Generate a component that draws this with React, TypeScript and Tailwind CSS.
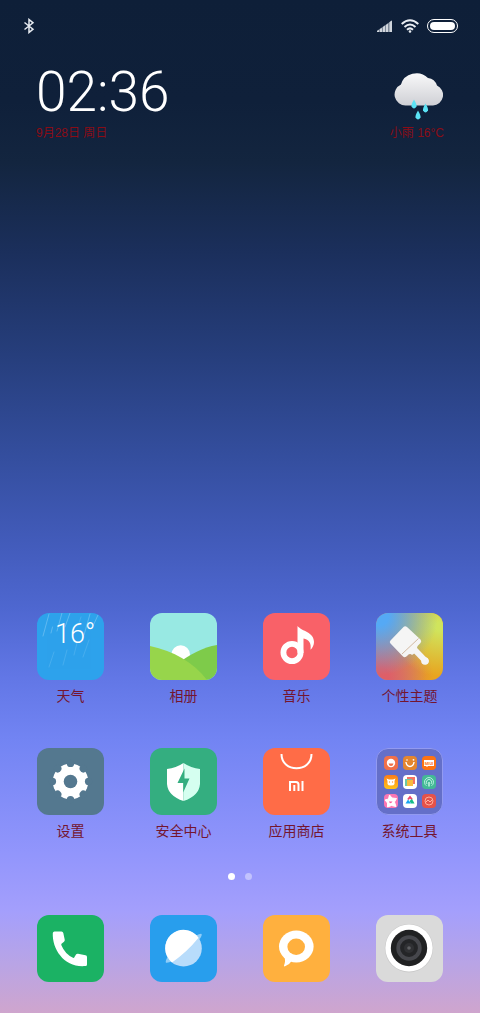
import React from 'react'

const GearIcon = () => (
  <svg viewBox="0 0 67 67" className="w-full h-full bg-[#54788f]">
    <circle cx="33.5" cy="33.5" r="17.8" fill="#fff" />
    {[0, 45, 90, 135, 180, 225, 270, 315].map((angle) => (
      <circle key={angle} cx="33.5" cy="15.4" r="3.7" fill="#54788f" transform={`rotate(${angle} 33.5 33.5)`} />
    ))}
    <circle cx="33.5" cy="33.5" r="6.8" fill="#54788f" />
  </svg>
)

const WeatherIcon = () => (
  <svg viewBox="0 0 67 67" className="w-full h-full bg-[#2da2ec]">
    <g stroke="#fff" strokeWidth="0.6" strokeLinecap="round">
      <path d="M12 1 L6 23 M15.500 14 L14 20 M25 0 L20 18 M33 0 L28 14 M53 1 L47 22 M61 2 L56 13" opacity="0.4" />
      <path d="M17 39 L12 54 M30 37 L26 52 M40 30 L37 42 M52 27 L46 44 M44 4 L41 13" opacity="0.2" />
    </g>
    <text x="18" y="30" fill="#fff" fontSize="27" className="font-['Roboto',sans-serif] font-light">16°</text>
  </svg>
)

const GalleryIcon = () => (
  <svg viewBox="0 0 67 67" className="w-full h-full bg-[#98e9e3]">
    <circle cx="30.700" cy="41.500" r="9.300" fill="#fff" />
    <path d="M28 50 C40 42 53 34 67 32 V67 H28 Z" fill="#7ecb4a" />
    <path d="M0 33 C24 38 43 49 57 67 H0 Z" fill="#97d54b" />
  </svg>
)

const MusicIcon = () => (
  <svg viewBox="0 0 67 67" className="w-full h-full bg-[#f96168]">
    <circle cx="29" cy="39.500" r="8.600" fill="none" stroke="#fff" strokeWidth="5.800" />
    <path d="M34.500 13 C39 18.500 51 19 51 29 C51 32 49.500 35 47.500 36.800 C48.500 30 46 26.500 40.500 25.500 V40 H34.500 Z" fill="#fff" />
  </svg>
)

const ThemeIcon = () => (
  <div className="w-full h-full bg-[radial-gradient(circle_at_5%_5%,#55a9f5_10%,transparent_65%),radial-gradient(circle_at_95%_20%,#d0e45c_5%,transparent_60%),radial-gradient(circle_at_5%_95%,#de5f68_10%,transparent_60%),linear-gradient(to_right,#b58a86,#e8a41f_75%)]">
    <svg viewBox="0 0 67 67" className="w-full h-full">
      <path d="M37 35 L49.500 48" stroke="#f5f5f5" strokeWidth="6" strokeLinecap="round" />
      <circle cx="49" cy="48" r="3.800" fill="#f5f5f5" />
      <path d="M27.500 14 Q29 12.500 31 14 L44.500 26.500 Q46 28 44.500 30 L42 32.500 Q40 35 42 38 L36 42 Q34 40 31.500 42.500 Q29 45.500 27 43.500 L14.500 30.500 Q13 29 14.500 27.500 Z" fill="#f5f5f5" />
      <path d="M26 41 L42.500 25.500" stroke="#c9a98c" strokeWidth="0.800" />
    </svg>
  </div>
)

const ShieldIcon = () => (
  <svg viewBox="0 0 67 67" className="w-full h-full bg-[#34ae80]">
    <path d="M33.500 15 Q26 20 17 21 V36 Q18 48 33.500 53 Z" fill="#fff" />
    <path d="M33.500 15 Q41 20 50 21 V36 Q49 48 33.500 53 Z" fill="#d5fff0" />
    <path d="M34.500 20.500 L27.500 35 H33.200 V44.500 L39.500 30.500 H34.500 Z" fill="#34ae80" />
  </svg>
)

const StoreIcon = () => (
  <svg viewBox="0 0 67 67" className="w-full h-full bg-[#ff6c47]">
    <path d="M18.500 6 C18.500 25 48.500 25 48.500 6" fill="none" stroke="#fff" strokeWidth="2" />
    <path d="M27 43 V34 H33 Q35.500 34 35.500 36.500 V43 M31.300 37 V43 M39.500 33 V43" fill="none" stroke="#fff" strokeWidth="2" />
  </svg>
)

const FolderIcon = () => (
  <div className="w-full h-full bg-[#646fc8] border-[1px] border-[#929af0] rounded-xl grid grid-cols-[14px_14px_14px] content-center justify-center gap-[5px]">
    <svg viewBox="0 0 14 14" className="w-[14px] h-[14px] rounded-sm bg-[#f0714a]">
      <circle cx="7" cy="7" r="4.200" fill="#fff" />
      <path d="M4.500 7.500 H9.500 Q9 10 7 10 Q5 10 4.500 7.500" fill="#f0714a" />
    </svg>
    <svg viewBox="0 0 14 14" className="w-[14px] h-[14px] rounded-sm bg-[#e5862e]">
      <path d="M3 6 Q3.500 10.500 7 10.500 Q10.500 10.500 11 6" fill="none" stroke="#fff" strokeWidth="1.400" />
      <circle cx="4" cy="4" r="0.800" fill="#fff" />
      <circle cx="10.500" cy="3.800" r="0.900" fill="#fff" />
    </svg>
    <svg viewBox="0 0 14 14" className="w-[14px] h-[14px] rounded-sm bg-[#ff7312]">
      <path d="M2 4 H12 V10 H6 L5 11 L4 10 H2 Z" fill="#fff" />
      <text x="7" y="8.500" fontSize="4" fontWeight="700" textAnchor="middle" fill="#ff7312" className="font-['Roboto',sans-serif]">MIUI</text>
    </svg>
    <svg viewBox="0 0 14 14" className="w-[14px] h-[14px] rounded-sm bg-linear-to-b from-[#fb7c18] to-[#ffc31a]">
      <path d="M2.500 3.500 L5 4.500 H9 L11.500 3.500 L10.500 6 V9 Q10 10.500 7 10.500 Q4 10.500 3.500 9 V6 Z" fill="#fff" />
      <circle cx="5.500" cy="7" r="0.700" fill="#fb9a3a" />
      <circle cx="8.500" cy="7" r="0.700" fill="#fb9a3a" />
    </svg>
    <svg viewBox="0 0 14 14" className="w-[14px] h-[14px] rounded-sm bg-white">
      <rect x="4" y="2" width="8" height="7" fill="#f57362" />
      <rect x="2" y="4" width="7" height="7" fill="#6cc9a5" />
      <rect x="4" y="5" width="6" height="6" fill="#f9ba3f" />
    </svg>
    <svg viewBox="0 0 14 14" className="w-[14px] h-[14px] rounded-sm bg-[#43b996]">
      <g fill="none" stroke="#d6fff0" strokeWidth="0.800">
        <path d="M4.500 10.800 A4.500 4.500 0 1 1 9.500 10.800" />
        <path d="M5 9 A2.700 2.700 0 1 1 9 9" />
        <path d="M7 7 V11.500" strokeWidth="1.300" />
      </g>
    </svg>
    <svg viewBox="0 0 14 14" className="w-[14px] h-[14px] rounded-sm bg-[#fb77b2]">
      <path d="M5.500 1 L8 4 L12.500 4.500 L10.500 8 L12 12.500 L7.500 11.500 L3.500 13 L3.500 9 L1 6 L4.500 5 Z" fill="#fff" stroke="#fff" strokeLinejoin="round" />
      <path d="M4.800 7.500 Q6.500 11 8.500 7.500 Z" fill="#fb5b9c" />
    </svg>
    <svg viewBox="0 0 14 14" className="w-[14px] h-[14px] rounded-sm bg-white">
      <path d="M5 5.500 L7 3 L9 5.500" fill="none" stroke="#ee4568" strokeWidth="2" />
      <path d="M9 5 L11.500 9.500 H8 L6.500 7 Z" fill="#15bc87" />
      <path d="M2.500 9.500 L5 5.500 L8 9.500 Z" fill="#1aa5f2" />
    </svg>
    <svg viewBox="0 0 14 14" className="w-[14px] h-[14px] rounded-sm bg-[#e5524a]">
      <circle cx="7" cy="7" r="4" fill="none" stroke="#ffb7a2" strokeWidth="0.900" />
      <path d="M3.500 8.500 L6 6 L8 8 L10.500 5.500" fill="none" stroke="#ffb7a2" strokeWidth="1" />
    </svg>
  </div>
)

const PhoneIcon = () => (
  <svg viewBox="0 0 67 67" className="w-full h-full bg-[#1bb264]">
    <path d="M17.500 16.500 H24.500 Q26 16.500 26.300 18 L27.700 24.500 Q28 26 27 26.800 L24.500 28.800 Q24 29.500 24.500 30.500 Q28 39 36 42.800 Q37 43.200 37.500 42 L39 39.500 Q39.700 38.500 41 38.700 L48.500 40.300 Q50 40.500 50 42 V49.500 Q50 51 48.500 51 C28 53 15 35 15.800 18 Q16 16.500 17.500 16.500 Z" fill="#fff" />
  </svg>
)

const BrowserIcon = () => (
  <svg viewBox="0 0 67 67" className="w-full h-full bg-[#289eed]">
    <path d="M46 20.500 Q51 18 51.700 19 Q52.300 22 46 28 Z M17.500 42 Q15 46.500 16 47.700 Q18 48.300 23 45.500 Z" fill="#8fcdf8" />
    <circle cx="33.500" cy="33.200" r="18.300" fill="#b8dcfb" />
    <path d="M22 47.400 A18.300 18.300 0 1 1 48.500 22.700 Q37 37 22 47.400 Z" fill="#fff" />
  </svg>
)

const MessageIcon = () => (
  <svg viewBox="0 0 67 67" className="w-full h-full bg-[#ffb03e]">
    <ellipse cx="33.300" cy="31.500" rx="17.300" ry="16" fill="#fff" />
    <path d="M21 40 Q23 46 21 50.500 Q21 52 22.500 51 Q27 49 29.500 45 Z" fill="#fff" />
    <ellipse cx="33.200" cy="31.700" rx="8.800" ry="8.200" fill="#ffb03e" />
  </svg>
)

const CameraIcon = () => (
  <svg viewBox="0 0 67 67" className="w-full h-full bg-[#dadada]">
    <circle cx="33" cy="33.200" r="24.200" fill="#cacaca" />
    <circle cx="33" cy="33" r="23.600" fill="#fff" />
    <circle cx="33" cy="33" r="18.200" fill="#202122" />
    <circle cx="33" cy="33" r="10.800" fill="#242527" stroke="#46474c" strokeWidth="3.800" />
    <circle cx="33" cy="33" r="5" fill="#303134" />
    <circle cx="33" cy="33" r="1.800" fill="#5f6063" />
  </svg>
)

const rows = [
  [
    { name: '天气', icon: <WeatherIcon /> },
    { name: '相册', icon: <GalleryIcon /> },
    { name: '音乐', icon: <MusicIcon /> },
    { name: '个性主题', icon: <ThemeIcon /> },
  ],
  [
    { name: '设置', icon: <GearIcon /> },
    { name: '安全中心', icon: <ShieldIcon /> },
    { name: '应用商店', icon: <StoreIcon /> },
    { name: '系统工具', icon: <FolderIcon /> },
  ],
]

const dock = [
  { name: '电话', icon: <PhoneIcon /> },
  { name: '浏览器', icon: <BrowserIcon /> },
  { name: '短信', icon: <MessageIcon /> },
  { name: '相机', icon: <CameraIcon /> },
]

const App = () => {
  return (
    <main className="min-h-screen flex flex-col font-['Liberation_Sans','Noto_Sans_CJK_SC',sans-serif] bg-[linear-gradient(to_bottom,#0e1f38_0%,#0f203a_10%,#13253f_16%,#1b2f5c_25%,#263e7c_35%,#344e9e_45%,#435cbc_54%,#4e67d0_60%,#6277e6_67%,#7284f3_73%,#9195fc_84%,#a49ffc_90%,#b8a4e6_95%,#cfa5cd_100%)]">
      {/* Status bar */}
      <header className="h-[52px] px-[22px] flex items-center justify-between">
        <svg viewBox="0 0 14 16" className="w-[14px] h-4" fill="none" stroke="#e6eaf0" strokeWidth="1.500">
          <path d="M2.500 4.500 L11 11.200 L7 14.500 V1.500 L11 4.800 L2.500 11.500" />
        </svg>
        <div className="flex items-center gap-2">
          <svg viewBox="0 0 16 12" className="w-4 h-3">
            <path d="M0 12 V10.800 L15 0.500 V12 Z" fill="#7d8898" />
            <path d="M0 12 V11 L2 10 V12 Z M3 12 V9 L5 8 V12 Z M6 12 V7 L8 5.500 V12 Z M9 12 V5 L11 3.500 V12 Z M12.500 12 V2 L15 0.500 V12 Z" fill="#d0d5dc" />
          </svg>
          <svg viewBox="0 0 18 14" className="w-[18px] h-[14px]" fill="none" stroke="#e9edf2" strokeWidth="2">
            <path d="M0.700 5 Q9 -2.500 17.300 5 M3.500 8 Q9 3 14.500 8 M6 10.700 Q9 8 12 10.700" />
            <circle cx="9" cy="12.500" r="1.300" fill="#e9edf2" stroke="none" />
          </svg>
          <div className="w-[31px] h-[14px] p-[2px] rounded-full border-[1px] border-white">
            <div className="h-full rounded-full bg-white"></div>
          </div>
        </div>
      </header>

      {/* Clock and weather */}
      <section className="px-9 pt-3 flex justify-between text-xs text-[#8a0c16]">
        <div>
          <time className="block h-[61px] text-[55px] leading-[56px] text-white font-light font-['Roboto',sans-serif]">02:36</time>
          <p>9月28日 周日</p>
        </div>
        <div className="flex flex-col items-end">
          <svg viewBox="0 0 50 52" className="w-[50px] h-[53px] mt-2">
            <defs>
              <linearGradient id="cloud" x1="0" y1="0" x2="0" y2="1">
                <stop offset="0" stopColor="#f8f8f9" />
                <stop offset="1" stopColor="#cfd0d5" />
              </linearGradient>
            </defs>
            <path d="M12 33 A11 11 0 0 1 7 12 A16 15 0 0 1 34 5.500 A11 11 0 0 1 43 13 A10.500 10.500 0 0 1 39 33 Z" fill="url(#cloud)" />
            <g fill="#5be3f5">
              <path d="M20 27 Q17 32 17.500 34 Q20 38 22.500 34 Q23 32 20 27 Z" />
              <path d="M31.500 31 Q28.500 36 29 38 Q31.500 42 34 38 Q34.500 36 31.500 31 Z" />
              <path d="M24 38 Q21 43 21.500 45 Q24 49 26.500 45 Q27 43 24 38 Z" />
            </g>
          </svg>
          <p>小雨 16°C</p>
        </div>
      </section>

      {/* Apps */}
      <section className="mt-auto px-[37px] flex flex-col gap-[43px]">
        {rows.map((row, i) => (
          <div key={i} className="flex justify-between">
            {row.map((app) => (
              <button key={app.name} className="w-[67px] flex flex-col items-center gap-2 text-sm leading-[17px] text-[#74152f]">
                <span className="block w-[67px] h-[67px] rounded-xl overflow-hidden">{app.icon}</span>
                {app.name}
              </button>
            ))}
          </div>
        ))}
      </section>

      <div className="mt-[33px] flex justify-center gap-[10px]">
        <span className="w-[7px] h-[7px] rounded-full bg-white"></span>
        <span className="w-[7px] h-[7px] rounded-full bg-white/40"></span>
      </div>

      {/* Dock */}
      <nav className="px-[37px] pt-[35px] pb-[31px] flex justify-between">
        {dock.map((app) => (
          <button key={app.name} aria-label={app.name} className="w-[67px] h-[67px] rounded-xl overflow-hidden">
            {app.icon}
          </button>
        ))}
      </nav>
    </main>
  )
}

export default App
